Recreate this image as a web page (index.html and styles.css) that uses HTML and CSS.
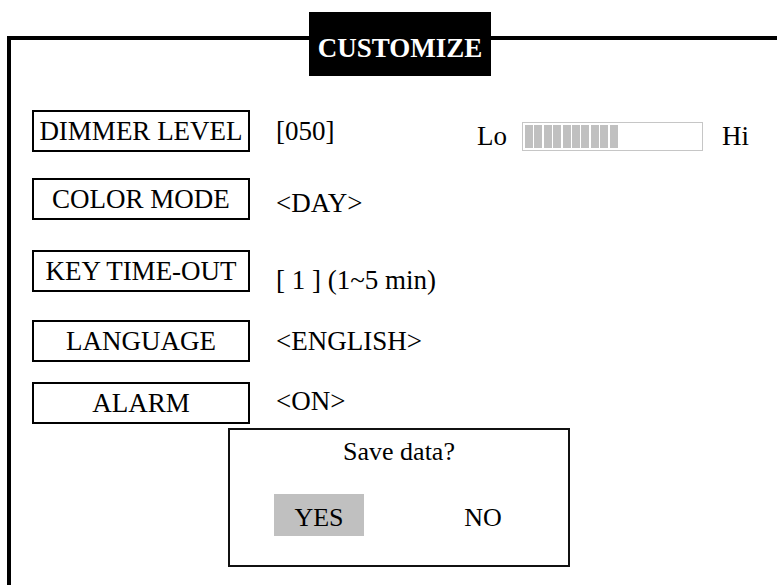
FILE: index.html
```html
<!DOCTYPE html>
<html>

<head>
    <meta charset="utf-8">
    <title>Customize</title>
    <meta name="viewport" content="width=device-width, initial-scale=1">
    <link rel="stylesheet" href="styles.css">
</head>

<body>
    <div class="frame">
        <div class="title">CUSTOMIZE</div>

        <div class="menu">
            <div class="row">
                <div class="label">DIMMER LEVEL</div>
                <div class="value value-level">[050]</div>
                <div class="range">
                    <span>Lo</span>
                    <div class="bar"><div class="fill" style="width: 53%"></div></div>
                    <span>Hi</span>
                </div>
            </div>
            <div class="row row-color">
                <div class="label">COLOR MODE</div>
                <div class="value value-low">&lt;DAY&gt;</div>
            </div>
            <div class="row row-key">
                <div class="label">KEY TIME-OUT</div>
                <div class="value value-lower">[ 1 ] (1~5 min)</div>
            </div>
            <div class="row row-lang">
                <div class="label">LANGUAGE</div>
                <div class="value">&lt;ENGLISH&gt;</div>
            </div>
            <div class="row row-alarm">
                <div class="label">ALARM</div>
                <div class="value value-high">&lt;ON&gt;</div>
            </div>
        </div>

        <!-- popup shown over the menu -->
        <div class="dialog">
            <div class="question">Save data?</div>
            <div class="choices">
                <div class="choice selected">YES</div>
                <div class="choice">NO</div>
            </div>
        </div>
    </div>
</body>

</html>
```

FILE: styles.css
```css
* {
    box-sizing: border-box;
}

body {
    margin: 0;
    overflow: hidden;
    background-color: #fff;
    color: #000;
    font-family: "Liberation Serif", "Times New Roman", serif;
}

/* only top and left edges show, the rest runs off screen */
.frame {
    position: relative;
    width: 770px;
    height: 549px;
    margin: 36px 0 0 7px;
    padding-left: 21px;
    border-top: 4px solid #000;
    border-left: 4px solid #000;
}

.title {
    display: flex;
    justify-content: center;
    align-items: center;
    width: 182px;
    height: 64px;
    margin: -28px 0 0 277px;
    padding-top: 9px;
    background-color: #000;
    color: #fff;
    font-size: 27px;
    font-weight: bold;
}

.menu {
    margin-top: 34px;
}

.row {
    display: flex;
    align-items: center;
    height: 42px;
    font-size: 27px;
}

.row-color {
    margin-top: 26px;
}

.row-key {
    margin-top: 30px;
}

.row-lang {
    margin-top: 28px;
}

.row-alarm {
    margin-top: 20px;
}

.label {
    display: flex;
    justify-content: center;
    align-items: center;
    width: 218px;
    height: 42px;
    margin-right: 26px;
    border: 2px solid #000;
}

.value-level {
    width: 201px;
}

.value-low {
    padding-top: 8px;
}

.value-lower {
    padding-top: 18px;
}

.value-high {
    padding-bottom: 4px;
}

.range {
    display: flex;
    align-items: center;
    margin-top: 10px;
}

.bar {
    width: 181px;
    height: 29px;
    margin: 0 19px 0 15px;
    padding: 2px;
    border: 1px solid #c6c6c6;
}

.fill {
    height: 100%;
    background: repeating-linear-gradient(90deg, #c0c0c0 0 8px, #fff 8px 9.4px);
}

.dialog {
    position: absolute;
    left: 217px;
    top: 388px;
    width: 342px;
    height: 139px;
    border: 2px solid #111;
    background-color: #fff;
    font-size: 26px;
}

.question {
    padding-top: 7px;
    line-height: 30px;
    text-align: center;
}

.choices {
    display: flex;
    gap: 74px;
    margin-top: 27px;
    padding-left: 44px;
}

.choice {
    display: flex;
    justify-content: center;
    align-items: center;
    width: 90px;
    height: 42px;
    padding-top: 6px;
}

.selected {
    background-color: #c0c0c0;
}
```
